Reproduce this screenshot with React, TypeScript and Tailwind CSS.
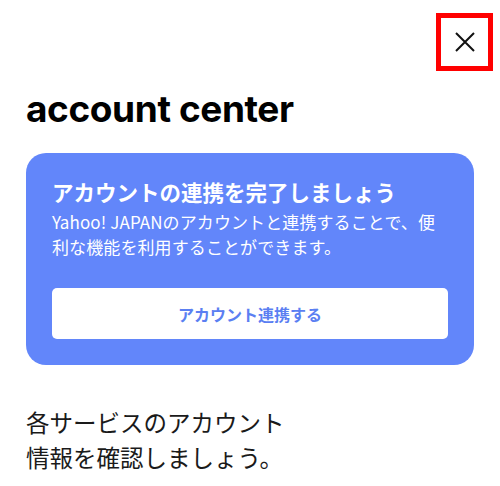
const jp = { fontFamily: '"Noto Sans CJK JP", "Noto Sans", sans-serif' }

export default function App() {
  return (
    <div className="w-[500px] h-[486px] bg-white overflow-hidden" style={jp}>
      <div className="flex justify-end pt-[13px] pr-[7px]">
        <button className="w-[57px] h-[58px] border-[5px] border-[#ff0000] flex items-center justify-center">
          <svg width="22" height="20" viewBox="0 0 22 20" fill="none" stroke="#111" strokeWidth="2">
            <path d="M2 1 L20 19 M20 1 L2 19" />
          </svg>
        </button>
      </div>

      <h1
        className="pl-[26px] mt-[18px] text-[37px] leading-[40px] font-bold text-black tracking-[-0.4px]"
        style={{ fontFamily: 'Inter, "Noto Sans", sans-serif' }}
      >
        account center
      </h1>

      <div className="mx-[26px] mt-[24px] bg-[#6286fa] rounded-[20px] px-[26px] pt-[24px] pb-[26px]">
        <h2 className="text-white font-bold text-[21.5px] leading-[30px]">アカウントの連携を完了しましょう</h2>
        <p className="text-white text-[17px] leading-[25px] mt-[2px] tracking-[0.1px]">
          Yahoo! JAPANのアカウントと連携することで、便利な機能を利用することができます。
        </p>
        <button className="mt-[29px] w-full h-[51px] bg-white rounded-[5px] text-[#5b7ff2] font-bold text-[16px]">
          アカウント連携する
        </button>
      </div>

      <p className="pl-[26px] mt-[40px] text-[23.5px] leading-[35px] text-[#1a1a1a]">
        各サービスのアカウント
        <br />
        情報を確認しましょう。
      </p>
    </div>
  )
}
